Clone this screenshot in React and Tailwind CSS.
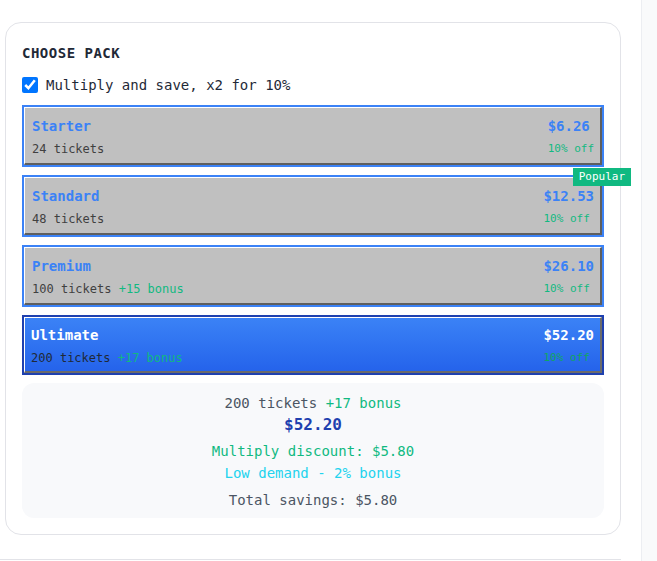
import { useState } from 'react';

const packs = [
  { name: 'Starter', tickets: 24, bonus: 0, price: '$6.26' },
  { name: 'Standard', tickets: 48, bonus: 0, price: '$12.53', popular: true },
  { name: 'Premium', tickets: 100, bonus: 15, price: '$26.10' },
  { name: 'Ultimate', tickets: 200, bonus: 17, price: '$52.20' },
];

function Pack({ pack, selected, onSelect }) {
  if (selected) {
    return (
      <button
        type="button"
        onClick={onSelect}
        className="relative block w-full text-left border-2 border-[#1e40af]"
      >
        <div className="flex items-start justify-between bg-gradient-to-b from-[#3b82f6] to-[#2563eb] border-t border-l border-white border-b-2 border-r-2 border-b-[#6b6b6b] border-r-[#6b6b6b] pl-[6px] pr-1.5 pt-[7px] pb-[5px]">
          <div>
            <div className="text-[14px] leading-5 font-bold text-white">{pack.name}</div>
            <div className="mt-[5px] text-[12px] leading-4 text-[#1f2937]">
              {pack.tickets} tickets
              {pack.bonus > 0 && <span className="text-[#10b981]"> +{pack.bonus} bonus</span>}
            </div>
          </div>
          <div className="flex flex-col items-start">
            <div className="text-[14px] leading-5 font-bold text-white">{pack.price}</div>
            <div className="mt-[5px] text-[11px] leading-4 text-[#10a660]">10% off</div>
          </div>
        </div>
      </button>
    );
  }
  return (
    <button
      type="button"
      onClick={onSelect}
      className="relative block w-full text-left border-2 border-[#3b82f6]"
    >
      <div className="flex items-start justify-between bg-[#c0c0c0] border-t border-l border-white border-b-2 border-r-2 border-b-[#5e5e5e] border-r-[#5e5e5e] pl-[7px] pr-1.5 pt-[8px] pb-[6px]">
        <div>
          <div className="text-[14px] leading-5 font-bold text-[#3b82f6]">{pack.name}</div>
          <div className="mt-[5px] text-[12px] leading-4 text-[#404040]">
            {pack.tickets} tickets
            {pack.bonus > 0 && <span className="text-[#10b981]"> +{pack.bonus} bonus</span>}
          </div>
        </div>
        <div className="flex flex-col items-start">
          <div className="text-[14px] leading-5 font-bold text-[#3b82f6]">{pack.price}</div>
          <div className="mt-[5px] text-[11px] leading-4 text-[#10b981]">10% off</div>
        </div>
      </div>
      {pack.popular && (
        <span className="absolute -top-[9px] -right-[29px] bg-[#10b981] px-1.5 text-[11px] leading-[18px] text-white">
          Popular
        </span>
      )}
    </button>
  );
}

export default function App() {
  const [selected, setSelected] = useState(3);
  const [multiply, setMultiply] = useState(true);
  const current = packs[selected];

  return (
    <div className="flex h-[561px] bg-white font-['DejaVu_Sans_Mono',monospace] overflow-hidden">
      <div className="w-[641px] shrink-0">
        <div className="ml-[5px] mt-[22px] w-[616px] rounded-2xl border border-[#e2e3e8] bg-white px-4 pt-5 pb-4">
          <h2 className="text-[14px] leading-5 font-bold tracking-[0.5px] text-[#1f2937]">CHOOSE PACK</h2>
          <label className="mt-3 flex h-5 items-center gap-2 text-[14px] text-[#1f2937]">
            <input
              type="checkbox"
              checked={multiply}
              onChange={(e) => setMultiply(e.target.checked)}
              className="m-0 h-4 w-4 accent-[#0075ff]"
            />
            Multiply and save, x2 for 10%
          </label>
          <div className="mt-2.5 flex flex-col gap-2">
            {packs.map((p, i) => (
              <Pack key={p.name} pack={p} selected={i === selected} onSelect={() => setSelected(i)} />
            ))}
          </div>
          <div className="mt-2 rounded-xl bg-[#f8f9fb] pt-2.5 pb-2 text-center">
            <div className="text-[14px] leading-5 text-[#4b5563]">
              {current.tickets} tickets <span className="text-[#10b981]">+{current.bonus} bonus</span>
            </div>
            <div className="text-[16px] leading-6 font-bold text-[#1e40af]">{current.price}</div>
            <div className="mt-[3px] text-[14px] leading-[22px] text-[#10b981]">Multiply discount: $5.80</div>
            <div className="text-[14px] leading-[22px] text-[#22d3ee]">Low demand - 2% bonus</div>
            <div className="mt-1.5 text-[14px] leading-5 text-[#4b5563]">Total savings: $5.80</div>
          </div>
        </div>
        <div className="mt-6 h-0 w-[621px] border-t border-[#e2e3e8]" />
      </div>
      <div className="flex-1 border-l border-[#eceef2] bg-[#f9fafb]" />
    </div>
  );
}
